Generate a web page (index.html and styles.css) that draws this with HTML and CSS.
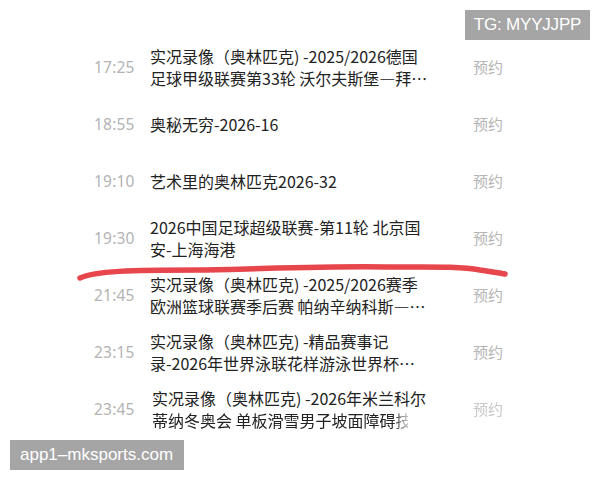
FILE: index.html
```html
<!DOCTYPE html>
<html lang="zh-CN">
<head>
<meta charset="utf-8">
<link rel="stylesheet" href="styles.css">
</head>
<body>
<div class="page">
  <ul class="list">
    <li class="row">
      <span class="time">17:25</span>
      <div class="title"><div class="ln">实况录像（奥林匹克) -2025/2026德国</div><div class="ln">足球甲级联赛第33轮 沃尔夫斯堡—拜…</div></div>
      <span class="book">预约</span>
    </li>
    <li class="row">
      <span class="time">18:55</span>
      <div class="title"><div class="ln">奥秘无穷-2026-16</div></div>
      <span class="book">预约</span>
    </li>
    <li class="row">
      <span class="time">19:10</span>
      <div class="title"><div class="ln">艺术里的奥林匹克2026-32</div></div>
      <span class="book">预约</span>
    </li>
    <li class="row">
      <span class="time">19:30</span>
      <div class="title"><div class="ln">2026中国足球超级联赛-第11轮 北京国</div><div class="ln">安-上海海港</div></div>
      <span class="book">预约</span>
    </li>
    <li class="row">
      <span class="time">21:45</span>
      <div class="title"><div class="ln">实况录像（奥林匹克) -2025/2026赛季</div><div class="ln">欧洲篮球联赛季后赛 帕纳辛纳科斯—…</div></div>
      <span class="book">预约</span>
    </li>
    <li class="row">
      <span class="time">23:15</span>
      <div class="title"><div class="ln">实况录像（奥林匹克) -精品赛事记</div><div class="ln">录-2026年世界泳联花样游泳世界杯…</div></div>
      <span class="book">预约</span>
    </li>
    <li class="row row-last">
      <span class="time">23:45</span>
      <div class="title"><div class="ln">实况录像（奥林匹克) -2026年米兰科尔</div><div class="ln ln-cut">蒂纳冬奥会 单板滑雪男子坡面障碍技</div></div>
      <span class="book book-faint">预约</span>
    </li>
  </ul>

  <svg class="scribble" width="600" height="480" viewBox="0 0 600 480">
    <path d="M80 278 C 95 271, 130 270, 200 270 C 260 269, 330 266, 385 267 C 430 267, 460 266, 480 270 C 492 272, 500 273, 505 274" fill="none" stroke="#e8464d" stroke-width="5.5" stroke-linecap="round"/>
  </svg>

  <div class="tag tag-tg">TG: MYYJJPP</div>
  <div class="tag tag-site">app1–mksports.com</div>
</div>
</body>
</html>
```

FILE: styles.css
```css
* { box-sizing: border-box; }
html, body {
  margin: 0;
  padding: 0;
  background: #ffffff;
}
.page {
  position: relative;
  width: 600px;
  height: 480px;
  overflow: hidden;
  font-family: "Noto Sans CJK SC", "Noto Sans", sans-serif;
}
.list {
  list-style: none;
  margin: 0;
  padding: 38px 0 0 94px;
  display: flex;
  flex-direction: column;
}
.row {
  height: 57px;
  display: grid;
  grid-template-columns: 56px 323px auto;
  align-items: center;
}
.time {
  font-size: 15.5px;
  color: #b3b3b3;
  font-family: "Noto Sans", "Noto Sans CJK SC", sans-serif;
  letter-spacing: 0.2px;
}
.title {
  font-size: 16px;
  line-height: 22px;
  color: #222222;
}
.ln {
  white-space: nowrap;
}
.row-last .title {
  padding-left: 2px;
}
.ln-cut {
  width: 256px;
  overflow: hidden;
  -webkit-mask-image: linear-gradient(to right, #000 94%, rgba(0,0,0,0.25) 100%);
  mask-image: linear-gradient(to right, #000 94%, rgba(0,0,0,0.25) 100%);
}
.book {
  font-size: 15px;
  color: #b5b5b5;
}
.book-faint {
  color: #c8c8c8;
  filter: blur(0.5px);
}
.scribble {
  position: absolute;
  left: 0;
  top: 0;
  pointer-events: none;
}
.tag {
  position: absolute;
  background: #a5a5a5;
  color: #ffffff;
  font-family: "Liberation Sans", Arial, sans-serif;
  font-size: 17px;
  height: 30px;
  line-height: 30px;
  white-space: nowrap;
}
.tag-tg {
  top: 10px;
  left: 465px;
  width: 125px;
  text-align: center;
  letter-spacing: -0.2px;
}
.tag-site {
  top: 440px;
  left: 10px;
  width: 174px;
  padding-left: 10px;
}
```
